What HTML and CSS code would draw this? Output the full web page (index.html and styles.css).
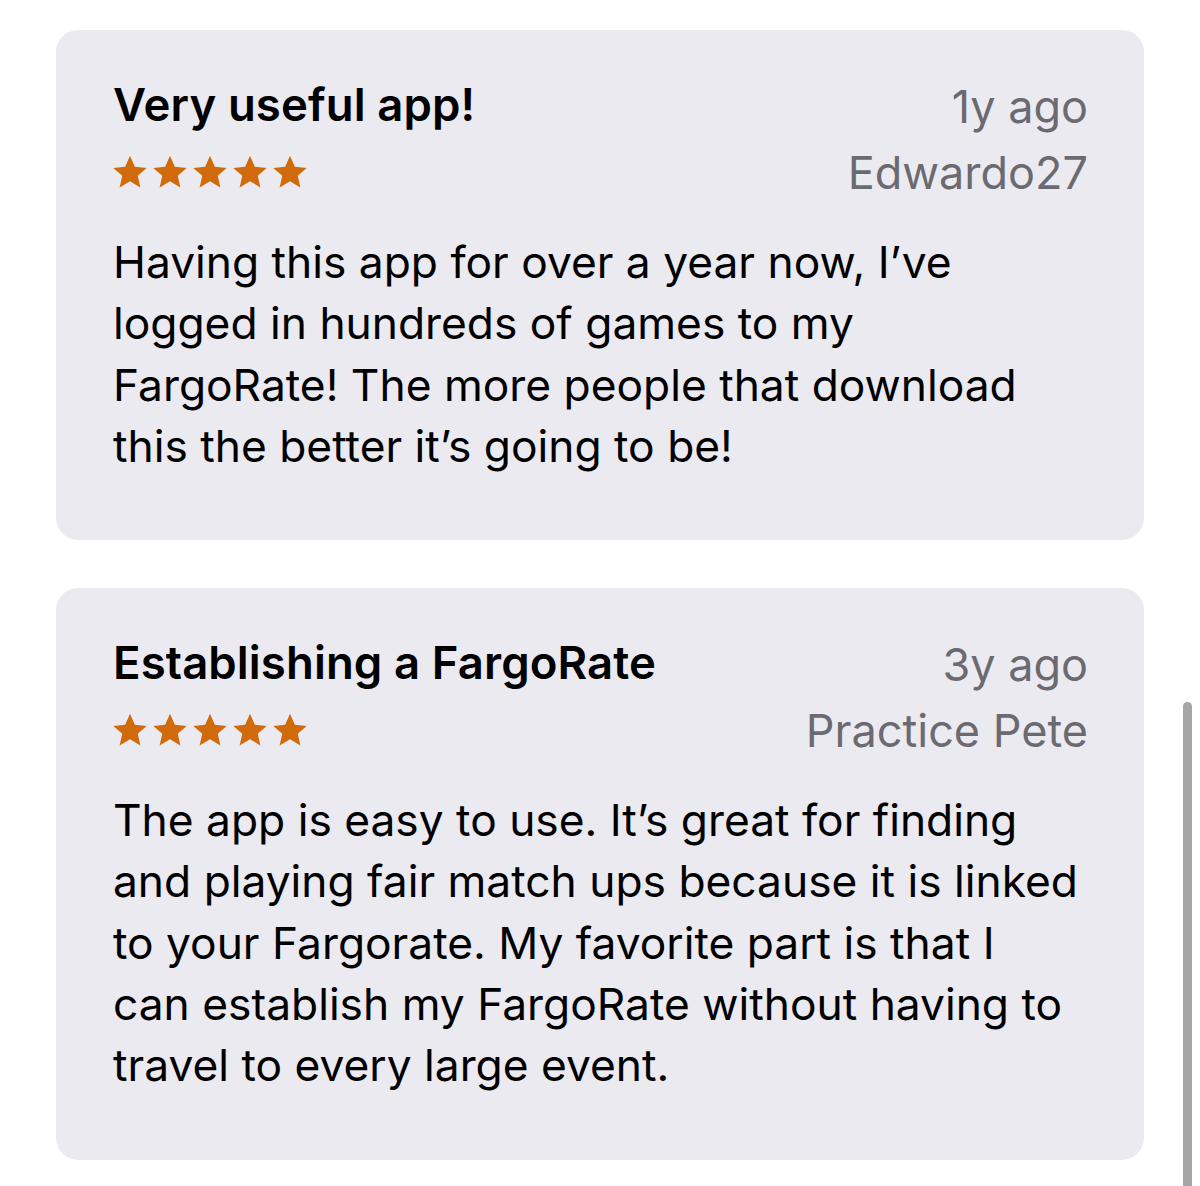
FILE: index.html
```html
<!DOCTYPE html>
<html lang="en">
<head>
<meta charset="utf-8">
<link rel="stylesheet" href="styles.css">
</head>
<body>
<main class="list">
  <article class="card">
    <header class="head">
      <div class="left">
        <h2 class="title">Very useful app!</h2>
        <div class="stars">
          <svg viewBox="0 0 24 24"><path d="M12 1.8l3.05 6.9 7.5.7-5.67 4.96 1.68 7.36L12 17.85l-6.56 3.87 1.68-7.36L1.45 9.4l7.5-.7z"/></svg>
          <svg viewBox="0 0 24 24"><path d="M12 1.8l3.05 6.9 7.5.7-5.67 4.96 1.68 7.36L12 17.85l-6.56 3.87 1.68-7.36L1.45 9.4l7.5-.7z"/></svg>
          <svg viewBox="0 0 24 24"><path d="M12 1.8l3.05 6.9 7.5.7-5.67 4.96 1.68 7.36L12 17.85l-6.56 3.87 1.68-7.36L1.45 9.4l7.5-.7z"/></svg>
          <svg viewBox="0 0 24 24"><path d="M12 1.8l3.05 6.9 7.5.7-5.67 4.96 1.68 7.36L12 17.85l-6.56 3.87 1.68-7.36L1.45 9.4l7.5-.7z"/></svg>
          <svg viewBox="0 0 24 24"><path d="M12 1.8l3.05 6.9 7.5.7-5.67 4.96 1.68 7.36L12 17.85l-6.56 3.87 1.68-7.36L1.45 9.4l7.5-.7z"/></svg>
        </div>
      </div>
      <div class="right">
        <div class="meta">1y ago</div>
        <div class="meta">Edwardo27</div>
      </div>
    </header>
    <p class="body">Having this app for over a year now, I’ve<br>logged in hundreds of games to my<br>FargoRate! The more people that download<br>this the better it’s going to be!</p>
  </article>
  <article class="card">
    <header class="head">
      <div class="left">
        <h2 class="title">Establishing a FargoRate</h2>
        <div class="stars">
          <svg viewBox="0 0 24 24"><path d="M12 1.8l3.05 6.9 7.5.7-5.67 4.96 1.68 7.36L12 17.85l-6.56 3.87 1.68-7.36L1.45 9.4l7.5-.7z"/></svg>
          <svg viewBox="0 0 24 24"><path d="M12 1.8l3.05 6.9 7.5.7-5.67 4.96 1.68 7.36L12 17.85l-6.56 3.87 1.68-7.36L1.45 9.4l7.5-.7z"/></svg>
          <svg viewBox="0 0 24 24"><path d="M12 1.8l3.05 6.9 7.5.7-5.67 4.96 1.68 7.36L12 17.85l-6.56 3.87 1.68-7.36L1.45 9.4l7.5-.7z"/></svg>
          <svg viewBox="0 0 24 24"><path d="M12 1.8l3.05 6.9 7.5.7-5.67 4.96 1.68 7.36L12 17.85l-6.56 3.87 1.68-7.36L1.45 9.4l7.5-.7z"/></svg>
          <svg viewBox="0 0 24 24"><path d="M12 1.8l3.05 6.9 7.5.7-5.67 4.96 1.68 7.36L12 17.85l-6.56 3.87 1.68-7.36L1.45 9.4l7.5-.7z"/></svg>
        </div>
      </div>
      <div class="right">
        <div class="meta">3y ago</div>
        <div class="meta">Practice Pete</div>
      </div>
    </header>
    <p class="body">The app is easy to use. It’s great for finding<br>and playing fair match ups because it is linked<br>to your Fargorate. My favorite part is that I<br>can establish my FargoRate without having to<br>travel to every large event.</p>
  </article>
</main>
<div class="scrollbar"></div>
</body>
</html>
```
FILE: styles.css
```css
html, body {
  margin: 0;
  padding: 0;
  background: #ffffff;
  height: 1186px;
  overflow: hidden;
}
body {
  font-family: Inter, "Open Sans", sans-serif;
  color: #000;
  position: relative;
}
.list {
  display: flex;
  flex-direction: column;
  gap: 48px;
  padding: 30px 0 0 56px;
  width: 1088px;
}
.card {
  background: #ebeaf0;
  border-radius: 22px;
  padding: 50px 56px 63px 57px;
}
.head {
  display: flex;
  justify-content: space-between;
  align-items: flex-start;
}
.left {
  display: flex;
  flex-direction: column;
}
.title {
  margin: 0;
  font-size: 45.5px;
  font-weight: 600;
  line-height: 50px;
  letter-spacing: 0.1px;
}
.stars {
  display: flex;
  gap: 2px;
  margin-top: 23px;
  margin-left: -2px;
}
.stars svg {
  width: 38px;
  height: 38px;
  fill: #d06a0b;
}
.right {
  display: flex;
  flex-direction: column;
  align-items: flex-end;
}
.meta {
  font-size: 45px;
  line-height: 66px;
  color: #6b6a70;
  margin-top: -6px;
}
.meta + .meta { margin-top: 0; }
.body {
  margin: 26px 0 0;
  font-size: 44.3px;
  line-height: 61.3px;
  letter-spacing: 0;
}
.scrollbar {
  position: absolute;
  left: 1183px;
  top: 702px;
  width: 9px;
  height: 500px;
  border-radius: 5px;
  background: #a6a6a6;
}
```
